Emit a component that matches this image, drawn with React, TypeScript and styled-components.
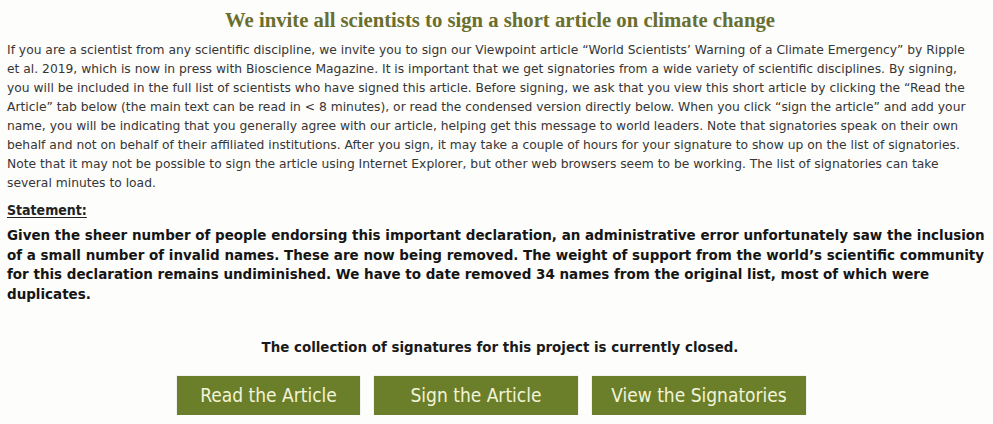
import React from 'react';
import styled, { createGlobalStyle } from 'styled-components';

const GlobalStyle = createGlobalStyle`
  html, body {
    margin: 0;
    padding: 0;
    background: #fdfdfb;
  }
  body {
    padding: 0 4px 0 7px;
  }
`;

const Main = styled.main`
  display: flex;
  flex-direction: column;
  padding-top: 8px;
`;

const Title = styled.h2`
  margin: 0;
  text-align: center;
  font-family: 'Liberation Serif', 'Times New Roman', serif;
  font-weight: bold;
  font-size: 20.7px;
  line-height: 25px;
  color: #6a6e2e;
  padding-left: 4px;
`;

const Intro = styled.p`
  margin: 8px 0 0 0;
  font-family: 'DejaVu Sans', sans-serif;
  font-size: 12.3px;
  line-height: 19px;
  color: #363636;
  white-space: nowrap;
`;

const Heading = styled.h4`
  margin: 8px 0 0 0;
  font-family: 'DejaVu Sans Condensed', 'DejaVu Sans', sans-serif;
  font-weight: bold;
  font-size: 14px;
  line-height: 18px;
  color: #222;
  text-decoration: underline;
  text-underline-offset: 2px;
`;

const Statement = styled.p`
  margin: 7px 0 0 0;
  font-family: 'DejaVu Sans', sans-serif;
  font-weight: bold;
  font-size: 13.48px;
  line-height: 19.5px;
  color: #151515;
  white-space: nowrap;
`;

const Closed = styled.p`
  margin: 34px 0 0 0;
  text-align: center;
  font-family: 'DejaVu Sans Condensed', 'DejaVu Sans', sans-serif;
  font-weight: bold;
  font-size: 14.9px;
  line-height: 18px;
  color: #1a1a1a;
  padding-left: 4px;
`;

const Buttons = styled.div`
  display: flex;
  justify-content: center;
  gap: 14px;
  margin-top: 20px;
  padding-right: 13px;
`;

const Button = styled.a<{ $width: number }>`
  display: block;
  width: ${(p) => p.$width}px;
  background: #6b7f2a;
  color: #f2f3d8;
  font-family: 'DejaVu Sans Condensed', 'DejaVu Sans', sans-serif;
  font-size: 19px;
  line-height: 39px;
  height: 39px;
  text-align: center;
  text-decoration: none;
  box-shadow: 0 0 1px rgba(0, 0, 0, 0.25);
  cursor: pointer;
`;

const introLines = [
  'If you are a scientist from any scientific discipline, we invite you to sign our Viewpoint article “World Scientists’ Warning of a Climate Emergency” by Ripple',
  'et al. 2019, which is now in press with Bioscience Magazine. It is important that we get signatories from a wide variety of scientific disciplines. By signing,',
  'you will be included in the full list of scientists who have signed this article. Before signing, we ask that you view this short article by clicking the “Read the',
  'Article” tab below (the main text can be read in < 8 minutes), or read the condensed version directly below. When you click “sign the article” and add your',
  'name, you will be indicating that you generally agree with our article, helping get this message to world leaders. Note that signatories speak on their own',
  'behalf and not on behalf of their affiliated institutions. After you sign, it may take a couple of hours for your signature to show up on the list of signatories.',
  'Note that it may not be possible to sign the article using Internet Explorer, but other web browsers seem to be working. The list of signatories can take',
  'several minutes to load.',
];

const statementLines = [
  'Given the sheer number of people endorsing this important declaration, an administrative error unfortunately saw the inclusion',
  'of a small number of invalid names. These are now being removed. The weight of support from the world’s scientific community',
  'for this declaration remains undiminished. We have to date removed 34 names from the original list, most of which were',
  'duplicates.',
];

const withBreaks = (lines: string[]) =>
  lines.map((line, i) => (
    <React.Fragment key={i}>
      {line}
      {i < lines.length - 1 && <br />}
    </React.Fragment>
  ));

const App: React.FC = () => {
  return (
    <>
      <GlobalStyle />
      <Main>
        <Title>We invite all scientists to sign a short article on climate change</Title>
        <Intro>{withBreaks(introLines)}</Intro>
        <Heading>Statement:</Heading>
        <Statement>{withBreaks(statementLines)}</Statement>
        <Closed>The collection of signatures for this project is currently closed.</Closed>
        <Buttons>
          <Button $width={183}>Read the Article</Button>
          <Button $width={204}>Sign the Article</Button>
          <Button $width={214}>View the Signatories</Button>
        </Buttons>
      </Main>
    </>
  );
};

export default App;
